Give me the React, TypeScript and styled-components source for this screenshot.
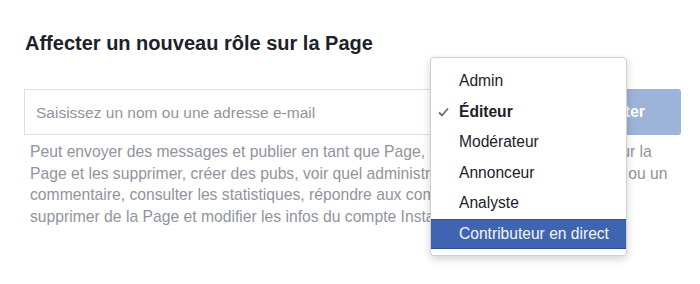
import styled, { createGlobalStyle } from "styled-components";

const GlobalStyle = createGlobalStyle`
    html, body {
        margin: 0;
        padding: 0;
        background: #ffffff;
        font-family: "Liberation Sans", Arial, sans-serif;
        -webkit-font-smoothing: antialiased;
    }
`;

const Wrapper = styled.div`
    position: relative;
    width: 700px;
    height: 284px;
    overflow: hidden;
    padding: 31px 19px 0 24px;
    box-sizing: border-box;
`;

const Title = styled.h2`
    margin: 0 0 0 1px;
    font-size: 20px;
    line-height: 24px;
    font-weight: 700;
    color: #1d2129;
`;

const Row = styled.div`
    display: flex;
    gap: 8px;
    margin-top: 34px;
    height: 46px;
`;

const EmailInput = styled.input`
    flex: 1;
    box-sizing: border-box;
    height: 100%;
    border: 1px solid #dddfe2;
    border-radius: 0;
    padding: 2px 11px 0;
    font-family: inherit;
    font-size: 15.5px;
    color: #1d2129;
    outline: none;
    &::placeholder {
        color: #90949c;
    }
`;

const AddButton = styled.button`
    width: 128px;
    height: 100%;
    border: none;
    border-radius: 3px;
    background: #9cb4d8;
    color: #ffffff;
    font-family: inherit;
    font-size: 16px;
    font-weight: 700;
`;

const Description = styled.p`
    margin: 6px 0 0 6px;
    max-width: 650px;
    font-size: 15.7px;
    line-height: 21.7px;
    color: #90949c;
`;

const Menu = styled.ul`
    position: absolute;
    left: 430px;
    top: 57px;
    width: 197px;
    margin: 0;
    padding: 8px 0 6px;
    list-style: none;
    box-sizing: border-box;
    background: #ffffff;
    border: 1px solid #d0d0d0;
    border-radius: 4px;
    box-shadow: 0 3px 8px rgba(0, 0, 0, 0.18);
`;

const MenuItem = styled.li<{ $active?: boolean; $checked?: boolean }>`
    position: relative;
    height: 30.5px;
    display: flex;
    align-items: center;
    padding-left: 28px;
    box-sizing: border-box;
    font-size: 15.6px;
    font-weight: ${(p) => (p.$checked ? 700 : 400)};
    color: ${(p) => (p.$active ? "#f2f5fb" : "#1d2129")};
    background: ${(p) => (p.$active ? "#3f64b2" : "transparent")};
    border-top: ${(p) => (p.$active ? "1px solid #2f4f95" : "none")};
    border-bottom: ${(p) => (p.$active ? "1px solid #2f4f95" : "none")};
`;

const Check = styled.svg`
    position: absolute;
    left: 7px;
    top: 50%;
    transform: translateY(-50%);
`;

const roles = ["Admin", "Éditeur", "Modérateur", "Annonceur", "Analyste", "Contributeur en direct"];

function App() {
    return (
        <>
            <GlobalStyle />
            <Wrapper>
                <Title>Affecter un nouveau rôle sur la Page</Title>
                <Row>
                    <EmailInput placeholder="Saisissez un nom ou une adresse e-mail" />
                    <AddButton>Ajouter</AddButton>
                </Row>
                <Description>
                    Peut envoyer des messages et publier en tant que Page, répondre aux publications sur la
                    Page et les supprimer, créer des pubs, voir quel administrateur a créé une publication ou un
                    commentaire, consulter les statistiques, répondre aux commentaires Instagram et les
                    supprimer de la Page et modifier les infos du compte Instagram.
                </Description>
                <Menu>
                    {roles.map((role, i) => (
                        <MenuItem key={role} $checked={i === 1} $active={i === 5}>
                            {i === 1 && (
                                <Check width="11" height="9" viewBox="0 0 11 9">
                                    <path d="M1 5 L4 8 L10 1" fill="none" stroke="#6b6b6b" strokeWidth="1.8" />
                                </Check>
                            )}
                            {role}
                        </MenuItem>
                    ))}
                </Menu>
            </Wrapper>
        </>
    );
}

export default App;
